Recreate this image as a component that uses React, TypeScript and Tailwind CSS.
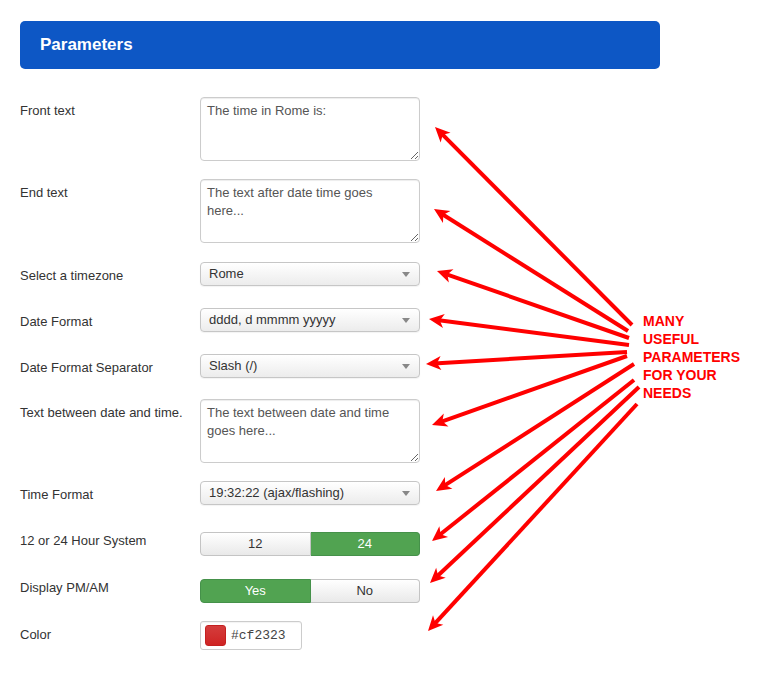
import React from "react";

const arrows: [number, number, number, number][] = [
  [435, 127, 632, 325],
  [434, 209, 628, 331],
  [437, 271, 629, 338],
  [429, 319, 629, 345],
  [426, 364, 627, 352],
  [432, 425, 627, 356],
  [436, 491, 634, 364],
  [432, 541, 634, 380],
  [430, 583, 639, 387],
  [428, 631, 637, 404],
];

function Arrow({ a }: { a: [number, number, number, number] }) {
  const [tx, ty, ex, ey] = a;
  const dx = ex - tx;
  const dy = ey - ty;
  const len = Math.hypot(dx, dy);
  const ux = dx / len;
  const uy = dy / len;
  const nx = -uy;
  const ny = ux;
  const L = 15;
  const W = 7;
  const bx = tx + ux * L;
  const by = ty + uy * L;
  const pts = [
    [tx, ty],
    [bx + nx * W, by + ny * W],
    [tx + ux * (L - 4), ty + uy * (L - 4)],
    [bx - nx * W, by - ny * W],
  ]
    .map((p) => p.join(","))
    .join(" ");
  return (
    <g>
      <line
        x1={tx + ux * 8}
        y1={ty + uy * 8}
        x2={ex}
        y2={ey}
        stroke="#ff0000"
        strokeWidth={4}
      />
      <polygon points={pts} fill="#ff0000" />
    </g>
  );
}

function Label({ children }: { children: React.ReactNode }) {
  return (
    <div className="w-[180px] shrink-0 pt-[5px] text-[13px] leading-[18px] text-[#333]">
      {children}
    </div>
  );
}

function TextArea({ value }: { value: string }) {
  return (
    <textarea
      readOnly
      defaultValue={value}
      className="block w-[220px] h-[64px] border border-[#cccccc] rounded-[4px] bg-white pl-[6px] pr-[20px] py-[4px] text-[13px] leading-[18px] text-[#555] font-['Liberation_Sans',Arial,sans-serif] shadow-[inset_0_1px_1px_rgba(0,0,0,0.075)] outline-none overflow-hidden"
    />
  );
}

function Select({ value }: { value: string }) {
  return (
    <div className="flex items-center justify-between w-[220px] h-[24px] border border-[#c6c6c6] rounded-[4px] bg-gradient-to-b from-white to-[#ececec] pl-[8px] pr-[9px] text-[13px] text-[#333] shadow-[0_1px_1px_rgba(0,0,0,0.05)]">
      <span>{value}</span>
      <svg width="8" height="5" viewBox="0 0 8 5">
        <polygon points="0,0 8,0 4,5" fill="#888" />
      </svg>
    </div>
  );
}

function Toggle({ left, right, active }: { left: string; right: string; active: 0 | 1 }) {
  const on = "bg-[#51a351] border-[#45914a] text-white";
  const off = "bg-gradient-to-b from-white to-[#e9e9e9] border-[#c4c4c4] text-[#333]";
  return (
    <div className="mt-[5px] flex w-[220px] h-[24px] text-[13px]">
      <div
        className={
          "flex-1 flex items-center justify-center border rounded-l-[4px] " +
          (active === 0 ? on : off)
        }
      >
        {left}
      </div>
      <div
        className={
          "flex-1 flex items-center justify-center border border-l-0 rounded-r-[4px] " +
          (active === 1 ? on : off)
        }
      >
        {right}
      </div>
    </div>
  );
}

export default function App() {
  return (
    <div className="relative w-[779px] h-[692px] bg-white font-['Liberation_Sans',Arial,sans-serif] overflow-hidden">
      <div className="pl-[20px] pt-[21px]">
        <div className="w-[640px] h-[48px] rounded-[5px] bg-[#0d57c5] flex items-center pl-[20px]">
          <span className="text-white font-bold text-[17px]">Parameters</span>
        </div>

        <div className="flex flex-col">
          <div className="flex mt-[28px]">
            <Label>Front text</Label>
            <TextArea value="The time in Rome is:" />
          </div>
          <div className="flex mt-[18px]">
            <Label>End text</Label>
            <TextArea value="The text after date time goes here..." />
          </div>
          <div className="flex mt-[19px]">
            <Label>Select a timezone</Label>
            <Select value="Rome" />
          </div>
          <div className="flex mt-[22px]">
            <Label>Date Format</Label>
            <Select value="dddd, d mmmm yyyyy" />
          </div>
          <div className="flex mt-[22px]">
            <Label>Date Format Separator</Label>
            <Select value="Slash (/)" />
          </div>
          <div className="flex mt-[21px]">
            <Label>Text between date and time.</Label>
            <TextArea value="The text between date and time goes here..." />
          </div>
          <div className="flex mt-[18px]">
            <Label>Time Format</Label>
            <Select value="19:32:22 (ajax/flashing)" />
          </div>
          <div className="flex mt-[22px]">
            <Label>12 or 24 Hour System</Label>
            <Toggle left="12" right="24" active={1} />
          </div>
          <div className="flex mt-[18px]">
            <Label>Display PM/AM</Label>
            <Toggle left="Yes" right="No" active={0} />
          </div>
          <div className="flex mt-[18px]">
            <Label>Color</Label>
            <div className="flex items-center w-[102px] h-[29px] border border-[#cccccc] rounded-[3px] bg-white pl-[4px] shadow-[inset_0_1px_1px_rgba(0,0,0,0.05)]">
              <div className="w-[21px] h-[21px] rounded-[3px] bg-gradient-to-b from-[#d43c3c] to-[#cf2323] border border-[#c42020]" />
              <span className="ml-[5px] text-[13px] text-[#444] font-['Liberation_Mono',monospace]">
                #cf2323
              </span>
            </div>
          </div>
        </div>
      </div>

      <svg
        className="absolute inset-0 pointer-events-none"
        width="779"
        height="692"
        viewBox="0 0 779 692"
      >
        {arrows.map((a, i) => (
          <Arrow key={i} a={a} />
        ))}
      </svg>
      <div className="absolute left-[643px] top-[312px] text-[14px] leading-[18px] font-bold text-[#ff0000]">
        MANY
        <br />
        USEFUL
        <br />
        PARAMETERS
        <br />
        FOR YOUR
        <br />
        NEEDS
      </div>
    </div>
  );
}
